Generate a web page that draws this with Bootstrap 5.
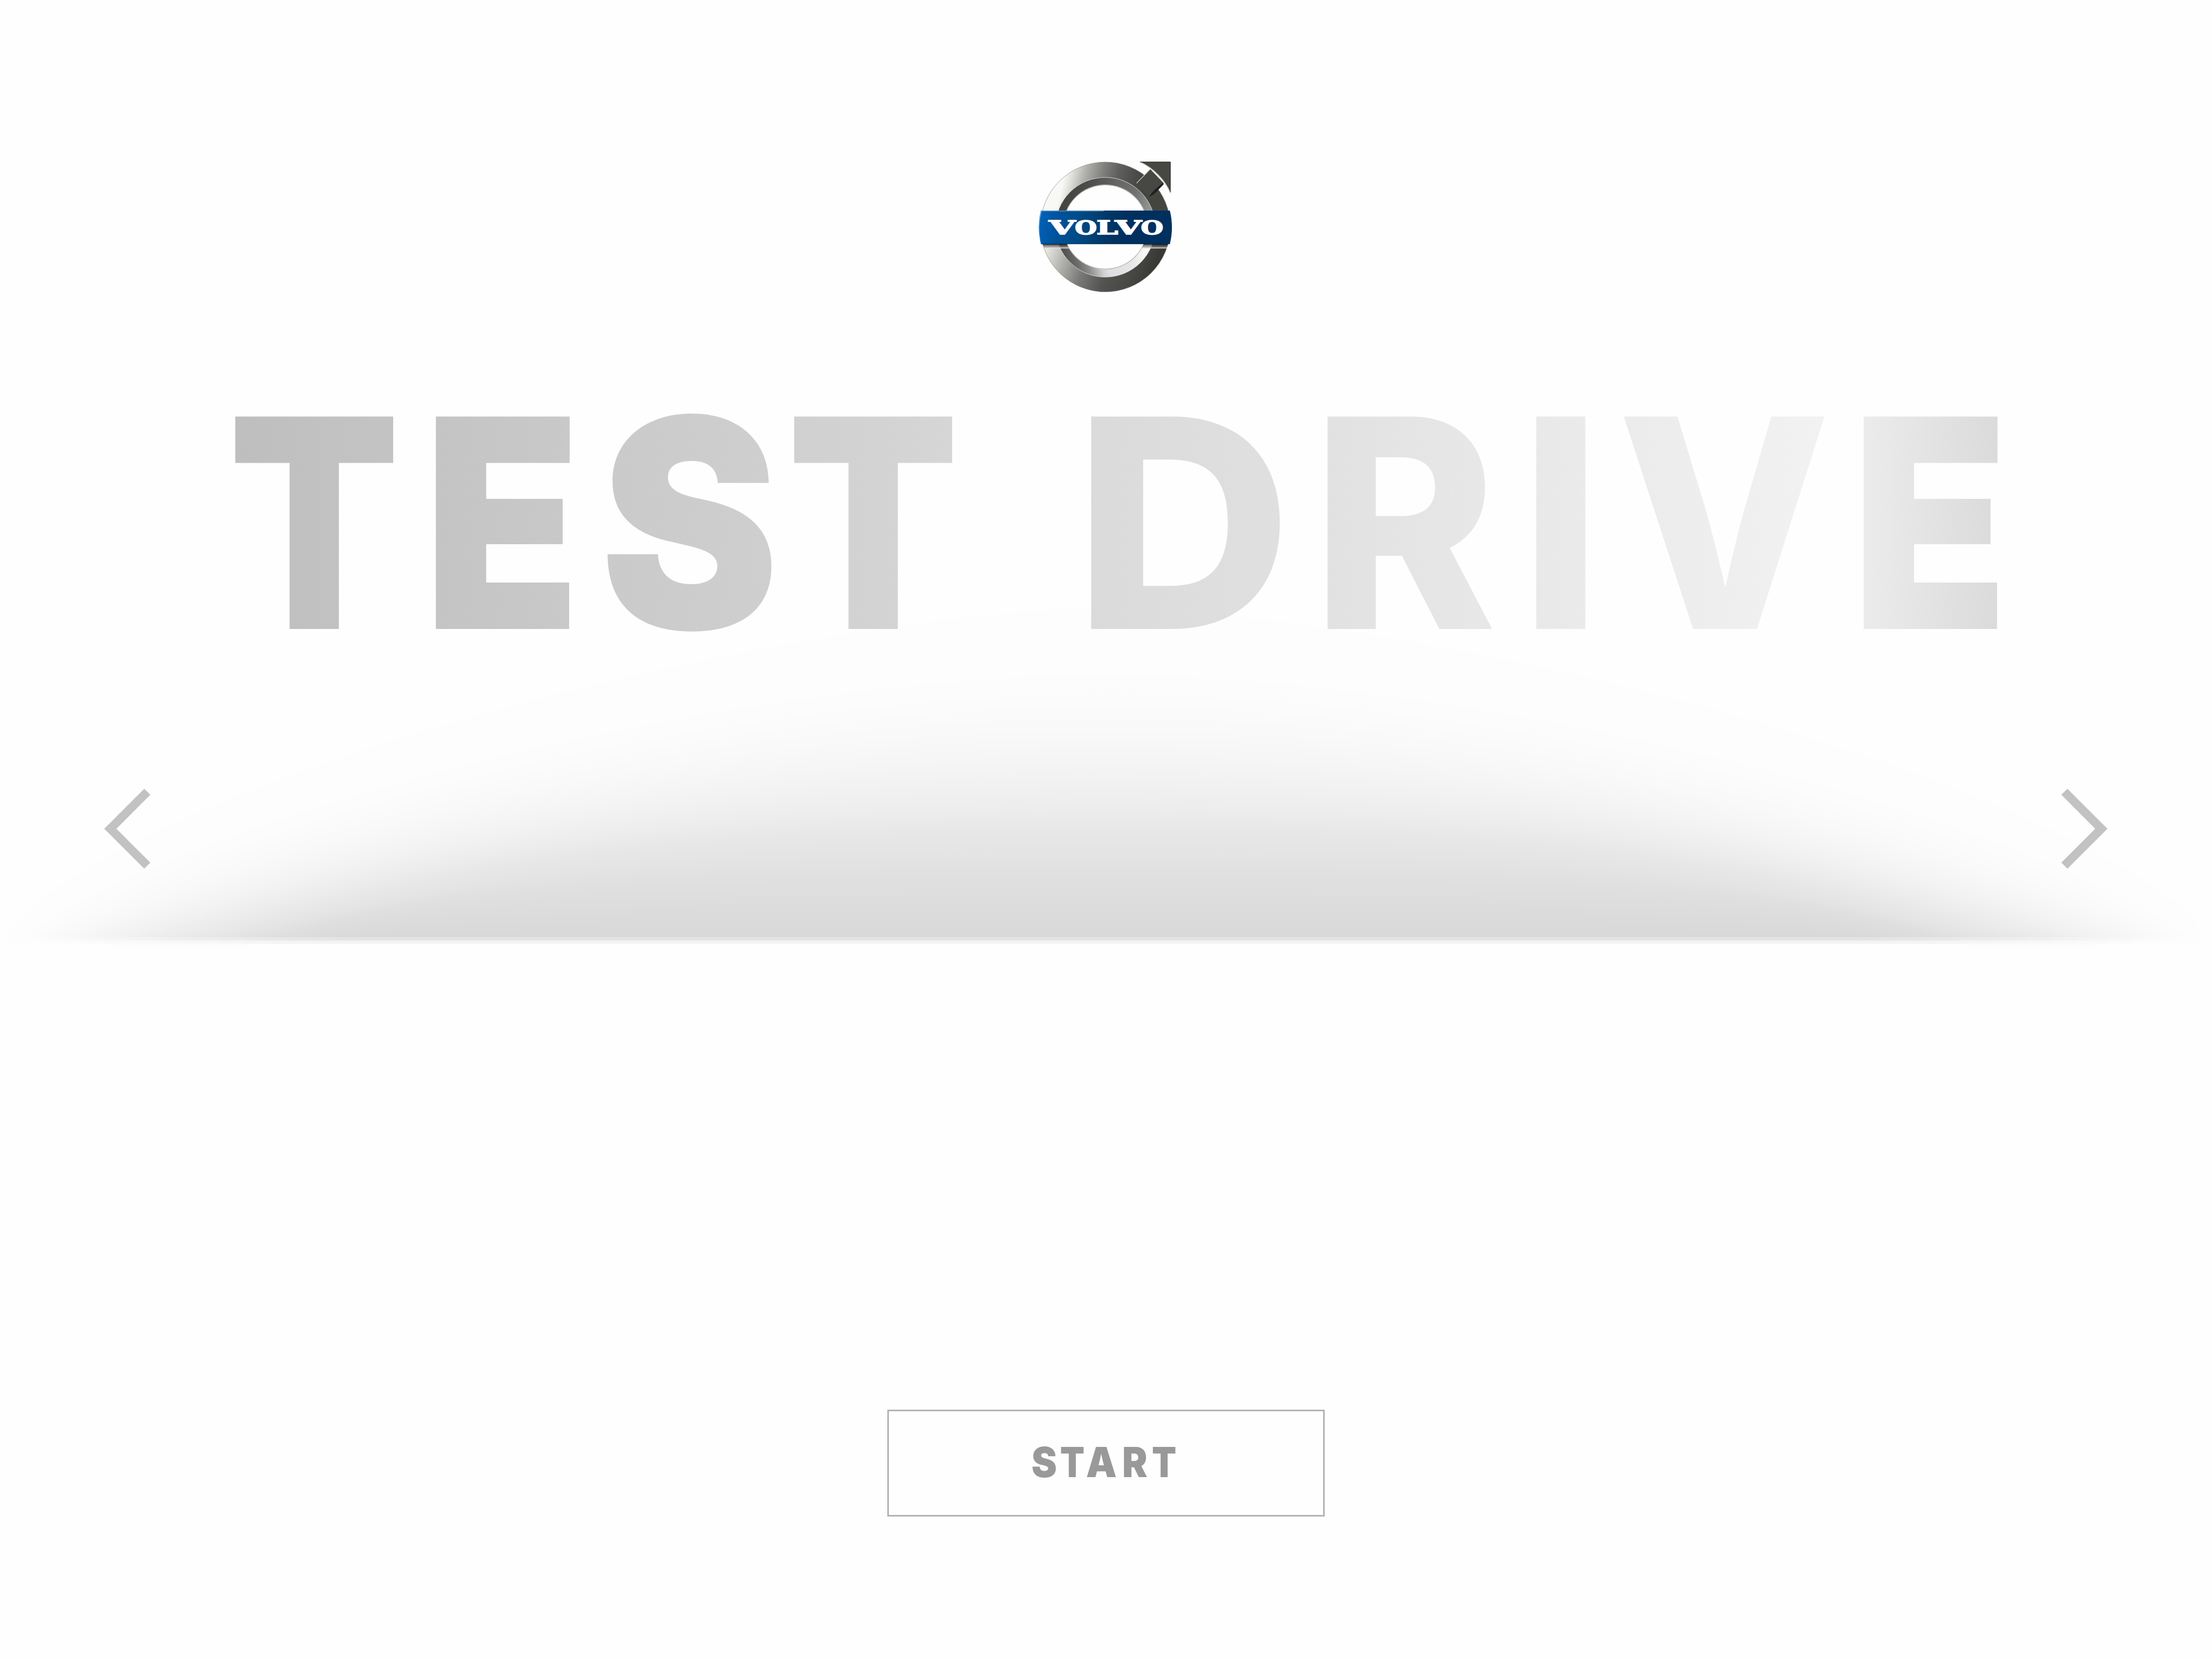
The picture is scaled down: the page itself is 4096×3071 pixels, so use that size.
<!DOCTYPE html>
<html lang="en">
<head>
<meta charset="utf-8">
<meta name="viewport" content="width=device-width, initial-scale=1">
<title>Volvo Test Drive</title>
<link href="https://cdn.jsdelivr.net/npm/bootstrap@5.3.0/dist/css/bootstrap.min.css" rel="stylesheet">
<style>
  html, body { background: #fefefe; }
  .screen { width: 4096px; height: 3071px; font-family: Inter, "Liberation Sans", sans-serif; }
  .floor-shade { left: 0; top: 0; width: 4096px; height: 3071px; z-index: 0; }
  .brand-logo { width: 287.8px; height: 280.7px; margin: 280.6px 0 0 1899.8px; }
  .glyph { display: block; flex: none; line-height: 1; transform: scaleX(var(--sx)); transform-origin: 0 50%; font-weight: 900; white-space: pre; }

  /* headline: every letter has its own width, gap and slice of the gradient */
  .headline { margin: 136.6px 0 0; height: 541px; font-size: 541px; line-height: 1; }
  .headline .glyph { color: transparent; background-image: linear-gradient(90deg, var(--c1), var(--c2)); -webkit-background-clip: text; background-clip: text; }
  .t1 { width: 371.7px; margin-left: 423.2px; --sx: .8555; --c1: #bebebe; --c2: #c4c4c4; }
  .e1 { width: 331.6px; margin-left: -10.3px; --sx: .873; --c1: #c4c4c4; --c2: #c9c9c9; }
  .s1 { width: 360.3px; margin-left: -5.6px; --sx: .92; --c1: #cacaca; --c2: #cfcfcf; }
  .t2 { width: 371.7px; margin-left: -13.2px; --sx: .8555; --c1: #d0d0d0; --c2: #d6d6d6; }
  .d1 { width: 391.1px; margin-left: 159.8px; --sx: 1.032; --c1: #dadada; --c2: #e0e0e0; }
  .r1 { width: 358.1px; margin-left: 49.1px; --sx: .957; --c1: #e1e1e1; --c2: #e8e8e8; }
  .i1 { width: 154.7px; margin-left: 27.1px; --sx: .973; --c1: #e8e8e8; --c2: #ebebeb; }
  .v1 { width: 416.6px; margin-left: 26px; --sx: .949; --c1: #ebebeb; --c2: #f2f2f2; }
  .e2 { width: 331.6px; margin-left: 17.1px; --sx: .873; --c1: #ededed; --c2: #d9d9d9; }
  .headline .d1, .headline .r1, .headline .i1, .headline .v1 { font-weight: 800; }

  .carousel-row { margin-top: 222.4px; height: 148px; padding: 0 193.3px; }
  .arrow-btn { width: 85.4px; height: 148px; line-height: 0; color: #c2c2c2; }
  .arrow-btn svg { width: 85.4px; height: 148px; fill: currentColor; }

  .start-btn { --bs-btn-color: #999; --bs-btn-border-color: #b3b3b3; --bs-btn-bg: #fefefe; width: 810.3px; height: 197.7px; margin: 1002.2px 0 0 1642.7px; padding: 0 0 2.6px 264.3px; border-width: 3px; font-size: 76.9px; font-family: inherit; }
  .bs1 { width: 51.2px; --sx: .92; }
  .bt1 { width: 52.8px; margin-left: 1.7px; --sx: .857; }
  .ba1 { width: 61.1px; margin-left: -4.4px; --sx: .932; }
  .br1 { width: 51.4px; margin-left: 5.5px; --sx: .91; }
  .bt2 { width: 52.8px; margin-left: 3.3px; --sx: .857; }
</style>
</head>
<body>
<main class="screen position-relative overflow-hidden">
  <svg class="floor-shade position-absolute" viewBox="0 0 5692 4267" aria-hidden="true">
    <defs>
      <linearGradient id="edge" gradientUnits="userSpaceOnUse" x1="0" y1="2400" x2="0" y2="2450">
        <stop offset="0" stop-color="#fff"/><stop offset=".24" stop-color="#fff"/>
        <stop offset=".24" stop-color="#fff" stop-opacity=".73"/><stop offset=".4" stop-color="#fff" stop-opacity=".73"/>
        <stop offset=".4" stop-color="#fff" stop-opacity=".3"/><stop offset=".58" stop-color="#fff" stop-opacity=".3"/>
        <stop offset=".58" stop-color="#fff" stop-opacity=".04"/><stop offset=".8" stop-color="#fff" stop-opacity=".04"/>
        <stop offset=".8" stop-color="#fff" stop-opacity="0"/>
      </linearGradient>
      <mask id="edgeMask" maskUnits="userSpaceOnUse" x="0" y="0" width="5692" height="4267" style="mask-type:alpha"><rect width="5692" height="4267" fill="url(#edge)"/></mask>
    </defs>
    <g id="shade" mask="url(#edgeMask)"></g>
  </svg>

  <div class="position-relative d-flex flex-column align-items-start">
    <svg class="brand-logo d-block" viewBox="0 0 1200 1170" role="img" aria-label="Volvo">
      <defs>
        <linearGradient id="ringTop" gradientUnits="userSpaceOnUse" x1="270" y1="290" x2="870" y2="430">
          <stop offset="0" stop-color="#f8f8f4"/><stop offset=".1" stop-color="#deded9"/><stop offset=".25" stop-color="#b0b0ac"/><stop offset=".45" stop-color="#828280"/><stop offset=".65" stop-color="#5f5f5e"/><stop offset=".88" stop-color="#4a4a47"/><stop offset="1" stop-color="#454540"/>
        </linearGradient>
        <linearGradient id="ringLow" gradientUnits="userSpaceOnUse" x1="180" y1="700" x2="950" y2="1000">
          <stop offset="0" stop-color="#e6e7e2"/><stop offset=".18" stop-color="#b2b2ae"/><stop offset=".38" stop-color="#7a7a78"/><stop offset=".6" stop-color="#535352"/><stop offset=".85" stop-color="#464642"/><stop offset="1" stop-color="#383834"/>
        </linearGradient>
        <linearGradient id="bevelTop" gradientUnits="userSpaceOnUse" x1="330" y1="290" x2="950" y2="450">
          <stop offset="0" stop-color="#454541"/><stop offset=".2" stop-color="#4c4c4a"/><stop offset=".55" stop-color="#666665"/><stop offset=".8" stop-color="#717271"/><stop offset="1" stop-color="#929694"/>
        </linearGradient>
        <linearGradient id="bevelLow" gradientUnits="userSpaceOnUse" x1="290" y1="830" x2="900" y2="720">
          <stop offset="0" stop-color="#4f4f4d"/><stop offset=".16" stop-color="#6c6c6b"/><stop offset=".28" stop-color="#868a88"/><stop offset=".46" stop-color="#cfd0d3"/><stop offset=".53" stop-color="#dddee1"/><stop offset=".78" stop-color="#e4e4e7"/><stop offset="1" stop-color="#f7f7f7"/>
        </linearGradient>
        <linearGradient id="band" gradientUnits="userSpaceOnUse" x1="130" y1="470" x2="760" y2="580">
          <stop offset="0" stop-color="#0060b4"/><stop offset=".2" stop-color="#00529a"/><stop offset=".45" stop-color="#004b87"/><stop offset=".8" stop-color="#003766"/><stop offset="1" stop-color="#00305f"/>
        </linearGradient>
        <linearGradient id="under" x1="0" y1="0" x2="0" y2="1">
          <stop offset="0" stop-color="#111" stop-opacity=".9"/><stop offset=".5" stop-color="#666" stop-opacity=".6"/><stop offset=".85" stop-color="#ccc" stop-opacity=".8"/><stop offset="1" stop-color="#f4f4f0"/>
        </linearGradient>
        <clipPath id="upper"><rect width="1200" height="600"/></clipPath>
        <clipPath id="lower"><rect y="600" width="1200" height="570"/></clipPath>
        <clipPath id="ringClip"><path clip-rule="evenodd" d="M612 79a502 502 0 1 0 .1 0ZM612 257a324 324 0 1 1-.1 0Z"/></clipPath>
      </defs>
      <g clip-path="url(#upper)" fill="none">
        <circle cx="612" cy="581" r="442" stroke="url(#ringTop)" stroke-width="120"/>
        <circle cx="612" cy="583" r="355" stroke="url(#bevelTop)" stroke-width="60"/>
      </g>
      <g clip-path="url(#lower)" fill="none">
        <circle cx="612" cy="581" r="442" stroke="url(#ringLow)" stroke-width="120"/>
        <circle cx="612" cy="583" r="355" stroke="url(#bevelLow)" stroke-width="60"/>
      </g>
      <g fill="none">
        <circle cx="612" cy="581" r="501" stroke="#8b8b83" stroke-width="3"/>
        <circle cx="612" cy="583" r="385" stroke="#e4e5df" stroke-width="3.5"/>
        <circle cx="612" cy="581" r="325" stroke="#b5b5ab" stroke-width="5"/>
      </g>
      <rect x="100" y="712" width="1020" height="35" fill="url(#under)" clip-path="url(#ringClip)"/>
      <path d="M958 133 852 245 952 347 1060 240Z" fill="#474744"/>
      <path d="M1060 238 1020 270C990 296 962 328 950 347 978 337 1004 315 1018 297L1062 252Z" fill="#1f1f1b"/>
      <path d="M958 135 853 243" stroke="#deded4" stroke-width="5"/>
      <path d="M880 79H1114V315C1070 218 985 128 880 79Z" fill="#484843"/>
      <path d="M880 80C985 128 1070 218 1112 314" fill="none" stroke="#d3d3c8" stroke-width="7"/>
      <path d="M880 79H1114V315" fill="none" stroke="#161614" stroke-width="4"/>
      <path d="M115 454H1110Q1142 583 1110 713H115Q82 583 115 454Z" fill="url(#band)"/>
      <path d="M600 458H119Q87 583 108 680" fill="none" stroke="#b9d3ea" stroke-width="3"/>
      <path d="M115 712H1110" stroke="#00203f" stroke-width="3"/>
      <g font-family="'DejaVu Serif', serif" font-weight="700" font-size="151" fill="#fff" stroke="#fff" stroke-width="7">
        <text transform="translate(175.7 637) scale(1.745 1)">V</text>
        <text transform="translate(376.4 637) scale(1.297 1)">O</text>
        <text transform="translate(543.3 637) scale(1.577 1)">L</text>
        <text transform="translate(686.7 637) scale(1.745 1)">V</text>
        <text transform="translate(886.3 637) scale(1.32 1)">O</text>
      </g>
    </svg>

    <h1 class="headline d-flex">
      <span class="d-flex"><span class="glyph t1">T</span><span class="glyph e1">E</span><span class="glyph s1">S</span><span class="glyph t2">T</span></span>
      <span class="d-flex"><span class="glyph d1">D</span><span class="glyph r1">R</span><span class="glyph i1">I</span><span class="glyph v1">V</span><span class="glyph e2">E</span></span>
    </h1>

    <div class="carousel-row w-100 d-flex justify-content-between">
      <button type="button" class="arrow-btn btn border-0 p-0" aria-label="Previous"><svg viewBox="86 92 356 617"><path d="M395 92 442 138 180 401 442 662 395 709 86 401Z"/></svg></button>
      <button type="button" class="arrow-btn btn border-0 p-0" aria-label="Next"><svg viewBox="86 92 356 617"><path d="M133 92 86 138 348 401 86 662 133 709 442 401Z"/></svg></button>
    </div>

    <button type="button" class="start-btn btn rounded-0 d-flex align-items-center"><span class="glyph bs1">S</span><span class="glyph bt1">T</span><span class="glyph ba1">A</span><span class="glyph br1">R</span><span class="glyph bt2">T</span></button>
  </div>
</main>
<script src="https://cdn.jsdelivr.net/npm/bootstrap@5.3.0/dist/js/bootstrap.bundle.min.js"></script>
<script>
  // Soft floor shade: nested contours, one per grey level, from the lightest to the darkest.
  // Columns: grey level, height above the floor, half width, roundness, falloff
  const table = [
    [253.5, 850, 2826, 1.5, .7], [253, 740, 2800, 1.6, .75], [252, 676, 2775, 1.7, .8], [251, 625, 2750, 1.8, .85],
    [248, 530, 2680, 2, .95], [245, 466, 2620, 2.1, 1], [241, 402, 2535, 2.3, 1.05], [237, 338, 2462, 2.6, 1.1],
    [231, 274, 2330, 3, 1.15], [227, 210, 2240, 3.2, 1.1], [223, 147, 2150, 4, .95], [220, 83, 2075, 5, .85], [217, 22, 1950, 7, .7]
  ];
  const at = g => {
    let i = 0;
    while (i < table.length - 2 && g < table[i + 1][0]) i++;
    const a = table[i], b = table[i + 1], k = (a[0] - g) / (a[0] - b[0]);
    return [1, 2, 3, 4].map(c => a[c] + (b[c] - a[c]) * k);
  };
  const floor = 2412, mid = 2846;
  let paths = '';
  for (let g = 253; g >= 217; g--) {
    const [h, w, r, q] = at(g + (g === 253 ? .5 : 0));
    let d = `M${mid - w} 2442`;
    for (let i = 0; i <= 160; i++) {
      const s = -Math.cos(Math.PI * i / 160);
      d += `L${(mid + s * w).toFixed(1)} ${(floor - h * Math.pow(Math.max(0, 1 - Math.pow(Math.abs(s), r)), q)).toFixed(1)}`;
    }
    paths += `<path d="${d}L${mid + w} 2442Z" fill="rgb(${g},${g},${g})"/>`;
  }
  document.getElementById('shade').innerHTML = paths;
</script>
</body>
</html>
